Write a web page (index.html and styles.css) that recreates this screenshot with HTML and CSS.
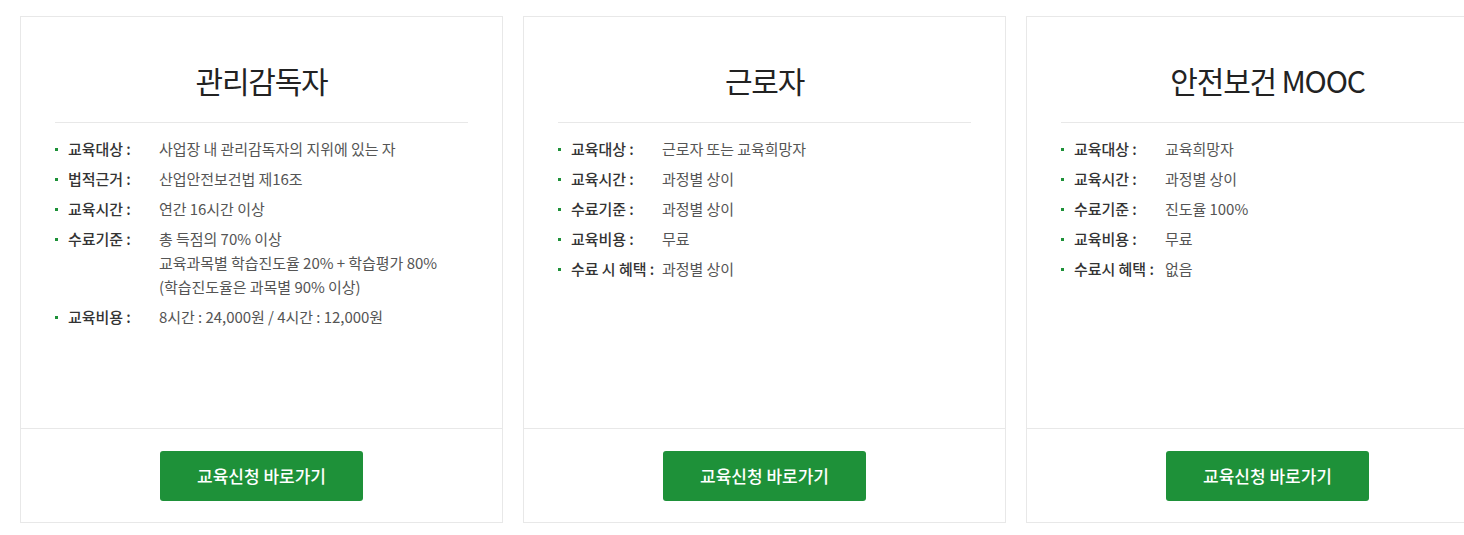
FILE: index.html
```html
<!DOCTYPE html>
<html>
<head>
	<meta charset="utf-8">
	<title>교육과정 안내</title>
	<link rel="stylesheet" href="styles.css">
</head>
<body>
	<div class="course-list">

		<!-- 관리감독자 -->
		<div class="course-card">
			<div class="course-body">
				<h2 class="course-title">관리감독자</h2>
				<ul class="course-info">
					<li><span class="info-label">교육대상 :</span><span class="info-value">사업장 내 관리감독자의 지위에 있는 자</span></li>
					<li><span class="info-label">법적근거 :</span><span class="info-value">산업안전보건법 제16조</span></li>
					<li><span class="info-label">교육시간 :</span><span class="info-value">연간 16시간 이상</span></li>
					<li><span class="info-label">수료기준 :</span><span class="info-value">총 득점의 70% 이상<br>교육과목별 학습진도율 20% + 학습평가 80%<br>(학습진도율은 과목별 90% 이상)</span></li>
					<li><span class="info-label">교육비용 :</span><span class="info-value">8시간 : 24,000원 / 4시간 : 12,000원</span></li>
				</ul>
			</div>
			<div class="course-foot">
				<a class="apply-btn" href="#">교육신청 바로가기</a>
			</div>
		</div>

		<!-- 근로자 -->
		<div class="course-card">
			<div class="course-body">
				<h2 class="course-title">근로자</h2>
				<ul class="course-info">
					<li><span class="info-label">교육대상 :</span><span class="info-value">근로자 또는 교육희망자</span></li>
					<li><span class="info-label">교육시간 :</span><span class="info-value">과정별 상이</span></li>
					<li><span class="info-label">수료기준 :</span><span class="info-value">과정별 상이</span></li>
					<li><span class="info-label">교육비용 :</span><span class="info-value">무료</span></li>
					<li><span class="info-label">수료 시 혜택 :</span><span class="info-value">과정별 상이</span></li>
				</ul>
			</div>
			<div class="course-foot">
				<a class="apply-btn" href="#">교육신청 바로가기</a>
			</div>
		</div>

		<!-- 안전보건 MOOC -->
		<div class="course-card">
			<div class="course-body">
				<h2 class="course-title">안전보건 MOOC</h2>
				<ul class="course-info">
					<li><span class="info-label">교육대상 :</span><span class="info-value">교육희망자</span></li>
					<li><span class="info-label">교육시간 :</span><span class="info-value">과정별 상이</span></li>
					<li><span class="info-label">수료기준 :</span><span class="info-value">진도율 100%</span></li>
					<li><span class="info-label">교육비용 :</span><span class="info-value">무료</span></li>
					<li><span class="info-label">수료시 혜택 :</span><span class="info-value">없음</span></li>
				</ul>
			</div>
			<div class="course-foot">
				<a class="apply-btn" href="#">교육신청 바로가기</a>
			</div>
		</div>

	</div>
</body>
</html>
```

FILE: styles.css
```css
/* course cards */

body {
	margin: 0;
	overflow: hidden;
	background: #fff;
	font-family: "Noto Sans CJK KR", "Noto Sans", sans-serif;
	color: #333;
}

.course-list {
	display: flex;
	gap: 20px;
	padding: 16px 20px;
}

.course-card {
	flex: 0 0 483px;
	height: 507px;
	box-sizing: border-box;
	border: 1px solid #e8e8e8;
	display: flex;
	flex-direction: column;
}

.course-body {
	flex: 1;
	padding: 0 34px;
}

.course-title {
	margin: 0;
	padding: 40px 0 19px;
	border-bottom: 1px solid #e8e8e8;
	font-size: 30px;
	font-weight: 400;
	line-height: 46px;
	color: #222;
	text-align: center;
	letter-spacing: -1.2px;
}

.course-info {
	list-style: none;
	margin: 0;
	padding: 14px 0 0;
}

.course-info li {
	position: relative;
	display: flex;
	padding-left: 13px;
	margin-bottom: 6px;
	font-size: 15px;
	line-height: 24px;
	letter-spacing: -0.05px;
}

.course-info li::before {
	content: "";
	position: absolute;
	left: 0;
	top: 11px;
	width: 3px;
	height: 3px;
	background: #1e9139;
}

.info-label {
	flex: 0 0 91px;
	font-weight: 500;
	color: #333;
	white-space: nowrap;
}

.info-value {
	color: #555;
}

.course-foot {
	border-top: 1px solid #e8e8e8;
	padding: 22px 0 21px;
	text-align: center;
}

.apply-btn {
	display: inline-block;
	width: 203px;
	height: 50px;
	line-height: 50px;
	border-radius: 3px;
	background: #1e9139;
	color: #fff;
	font-size: 17px;
	font-weight: 500;
	text-decoration: none;
}
```
